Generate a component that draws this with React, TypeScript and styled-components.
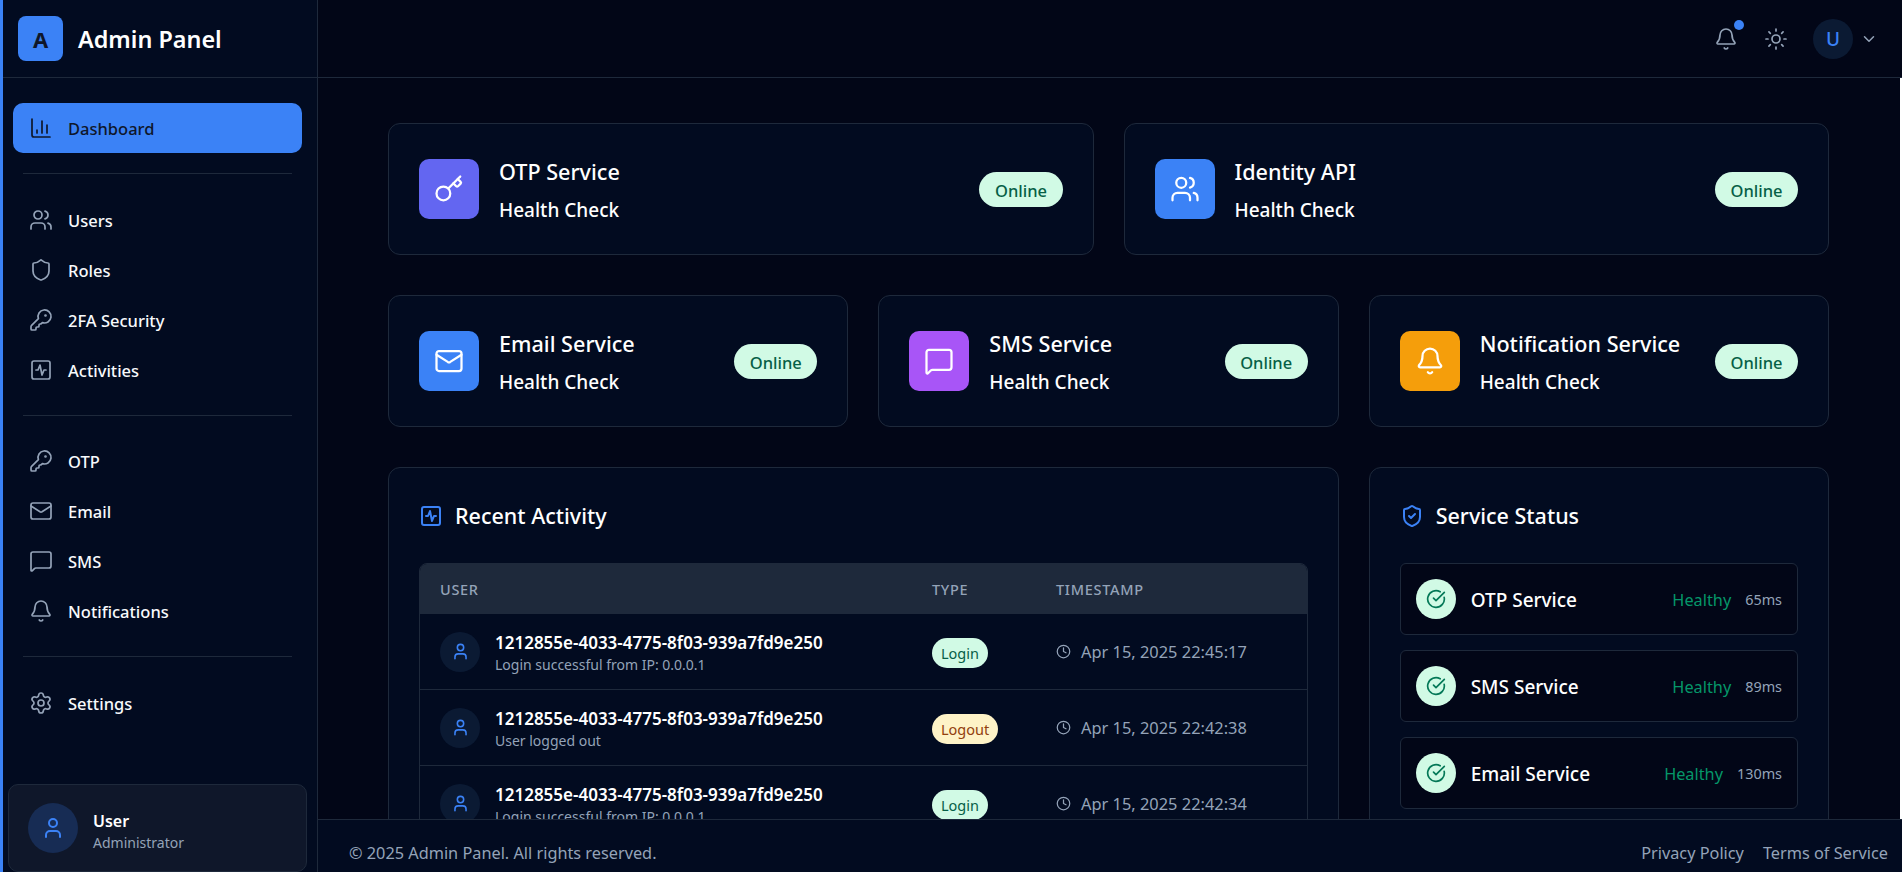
import React from 'react';
import styled, { createGlobalStyle } from 'styled-components';
import {
  ChartColumn, Users, Shield, KeyRound, SquareActivity, Mail, MessageSquare, Bell, Settings, User,
  Sun, ChevronDown, Key, ShieldCheck, CircleCheckBig, Clock,
} from 'lucide-react';

const Global = createGlobalStyle`
  html, body { margin: 0; padding: 0; height: 100%; overflow: hidden; background: #020617; }
  body { font-family: "Noto Sans", "Liberation Sans", sans-serif; color: #fff; }
  #root { height: 100%; }
  * { box-sizing: border-box; }
`;

const Shell = styled.div`
  display: flex;
  height: 872px;
  overflow: hidden;
  background: #020617;
`;
const Sidebar = styled.aside`
  width: 318px;
  flex: none;
  display: flex;
  flex-direction: column;
  background: #020b20;
  border-left: 3px solid #3b82f6;
  border-right: 1px solid #1e293b;
`;
const Brand = styled.div`
  height: 78px;
  flex: none;
  display: flex;
  align-items: center;
  gap: 15px;
  padding-left: 15px;
  border-bottom: 1px solid #1e293b;
`;
const Logo = styled.div`
  width: 45px;
  height: 45px;
  border-radius: 8px;
  background: #3b82f6;
  color: #0f172a;
  font-size: 22px;
  font-weight: 700;
  display: flex;
  align-items: center;
  justify-content: center;
`;
const BrandName = styled.div`
  font-size: 23.4px;
  font-weight: 600;
`;
const Nav = styled.nav`
  flex: 1;
  padding: 25px 15px 0 10px;
  display: flex;
  flex-direction: column;
`;
const NavItem = styled.div<{ $active?: boolean }>`
  height: 50px;
  flex: none;
  display: flex;
  align-items: center;
  gap: 15px;
  padding-left: 16px;
  border-radius: 10px;
  font-size: 16.5px;
  font-weight: 500;
  background: ${p => (p.$active ? '#3b82f6' : 'transparent')};
  color: ${p => (p.$active ? '#0f172a' : '#f8fafc')};
  & svg { color: ${p => (p.$active ? '#0f172a' : '#94a3b8')}; flex: none; }
`;
const NavDivider = styled.div<{ $after?: number }>`
  height: 1px;
  margin: 20px 10px ${p => p.$after ?? 21}px;
  background: #1e293b;
  flex: none;
`;
const UserCard = styled.div`
  height: 88px;
  flex: none;
  margin: 0 10px 0 5px;
  padding: 0 20px 0 19px;
  display: flex;
  align-items: center;
  gap: 15px;
  background: #0f172a;
  border: 1px solid #1e293b;
  border-radius: 10px;
`;
const UserAvatar = styled.div`
  width: 50px;
  height: 50px;
  border-radius: 50%;
  background: #172c54;
  color: #3b82f6;
  display: flex;
  align-items: center;
  justify-content: center;
`;
const UserName = styled.div`
  font-size: 16px;
  font-weight: 600;
  line-height: 22px;
  margin-top: 7px;
`;
const UserRole = styled.div`
  font-size: 14px;
  color: #94a3b8;
  line-height: 20px;
  margin-top: 1px;
`;
const Content = styled.div`
  flex: 1;
  min-width: 0;
  display: flex;
  flex-direction: column;
  background: #fff;
`;
const TopBar = styled.header`
  height: 78px;
  flex: none;
  display: flex;
  align-items: center;
  justify-content: flex-end;
  padding-right: 24px;
  background: #020617;
  border-bottom: 1px solid #1e293b;
`;
const BellWrap = styled.div`
  position: relative;
  display: flex;
  color: #94a3b8;
  margin-right: 26px;
`;
const Dot = styled.span`
  position: absolute;
  top: -7px;
  right: -6px;
  width: 10px;
  height: 10px;
  border-radius: 50%;
  background: #3b82f6;
`;
const SunWrap = styled.div`
  display: flex;
  color: #94a3b8;
  margin-right: 25px;
`;
const TopAvatar = styled.div`
  width: 40px;
  height: 40px;
  border-radius: 50%;
  background: #0b1a33;
  color: #3b82f6;
  font-size: 19px;
  font-weight: 500;
  display: flex;
  align-items: center;
  justify-content: center;
  margin-right: 7px;
`;
const ChevronWrap = styled.div`
  display: flex;
  color: #94a3b8;
`;
const Main = styled.main`
  flex: 1;
  min-height: 0;
  overflow: hidden;
  margin-right: 2px;
  padding: 45px 71px 0 70px;
  background: #020617;
`;
const CardRow = styled.div<{ $cols: number }>`
  display: grid;
  grid-template-columns: repeat(${p => p.$cols}, 1fr);
  gap: 30px;
  margin-bottom: 40px;
`;
const ServiceCard = styled.div`
  height: 132px;
  display: flex;
  align-items: center;
  padding: 0 30px;
  background: #020b20;
  border: 1px solid #1e293b;
  border-radius: 12px;
`;
const IconBox = styled.div<{ $bg: string }>`
  width: 60px;
  height: 60px;
  flex: none;
  border-radius: 10px;
  background: ${p => p.$bg};
  color: #fff;
  display: flex;
  align-items: center;
  justify-content: center;
  margin-right: 20px;
`;
const CardText = styled.div`
  flex: 1;
  min-width: 0;
  padding-top: 2px;
`;
const CardTitle = styled.div`
  font-size: 21.6px;
  font-weight: 500;
  line-height: 30px;
  margin-bottom: 9px;
  white-space: nowrap;
`;
const CardSub = styled.div`
  font-size: 19px;
  font-weight: 500;
  line-height: 28px;
`;
const OnlinePill = styled.span`
  flex: none;
  padding: 2px 15.5px 0;
  height: 35px;
  display: flex;
  align-items: center;
  border-radius: 18px;
  background: #d1fae5;
  color: #065f46;
  font-size: 16.5px;
  font-weight: 500;
`;
const Panels = styled.div`
  display: grid;
  grid-template-columns: repeat(3, 1fr);
  gap: 30px;
  align-items: start;
`;
const Panel = styled.section<{ $span?: number }>`
  grid-column: span ${p => p.$span ?? 1};
  min-width: 0;
  background: #020b20;
  border: 1px solid #1e293b;
  border-radius: 12px;
  padding: 30px;
  height: 600px;
`;
const PanelTitle = styled.h2`
  display: flex;
  align-items: center;
  gap: 12px;
  margin: 0 0 29px;
  font-size: 21.5px;
  font-weight: 500;
  line-height: 36px;
  height: 36px;
  & svg { color: #3b82f6; flex: none; }
`;
const TableWrap = styled.div`
  border: 1px solid #1e293b;
  border-radius: 8px 8px 0 0;
  overflow: hidden;
`;
const Table = styled.table`
  width: 100%;
  border-collapse: separate;
  border-spacing: 0;
  table-layout: fixed;
`;
const Th = styled.th<{ $w?: number }>`
  width: ${p => (p.$w ? `${p.$w}px` : 'auto')};
  height: 50px;
  padding: 0 20px;
  background: #1e293b;
  color: #94a3b8;
  text-align: left;
  font-size: 14.5px;
  font-weight: 500;
  letter-spacing: 0.7px;
  text-transform: uppercase;
`;
const Td = styled.td`
  height: 76px;
  padding: 0 20px;
  border-bottom: 1px solid #1e293b;
`;
const UserCell = styled.div`
  display: flex;
  align-items: center;
  gap: 15px;
`;
const RowAvatar = styled.div`
  width: 40px;
  height: 40px;
  border-radius: 50%;
  background: #0b1a33;
  color: #3b82f6;
  display: flex;
  align-items: center;
  justify-content: center;
  flex: none;
`;
const RowText = styled.div`
  padding-top: 2px;
`;
const RowId = styled.div`
  font-size: 17px;
  font-weight: 600;
  line-height: 24px;
  white-space: nowrap;
`;
const RowSub = styled.div`
  font-size: 14px;
  color: #94a3b8;
  line-height: 20px;
`;
const TypePill = styled.span<{ $kind: 'login' | 'logout' }>`
  display: inline-flex;
  align-items: center;
  height: 30px;
  padding: 0 9px;
  margin-top: 2px;
  border-radius: 15px;
  font-size: 14.5px;
  font-weight: 400;
  background: ${p => (p.$kind === 'login' ? '#d1fae5' : '#fef3c7')};
  color: ${p => (p.$kind === 'login' ? '#065f46' : '#92400e')};
`;
const TimeCell = styled.div`
  display: flex;
  align-items: center;
  gap: 10px;
  color: #94a3b8;
  font-size: 16.4px;
  white-space: nowrap;
`;
const StatusList = styled.div`
  display: flex;
  flex-direction: column;
  gap: 15px;
`;
const StatusItem = styled.div`
  height: 72px;
  display: flex;
  align-items: center;
  padding: 0 15px;
  background: #020617;
  border: 1px solid #1e293b;
  border-radius: 6px;
`;
const StatusIcon = styled.div`
  width: 40px;
  height: 40px;
  flex: none;
  border-radius: 50%;
  background: #d1fae5;
  color: #047857;
  display: flex;
  align-items: center;
  justify-content: center;
  margin-right: 15px;
`;
const StatusName = styled.div`
  flex: 1;
  padding-top: 2px;
  font-size: 19px;
  font-weight: 500;
  white-space: nowrap;
`;
const Healthy = styled.div`
  color: #059669;
  padding-top: 2px;
  font-size: 16.3px;
  margin-right: 14px;
`;
const Latency = styled.div`
  color: #94a3b8;
  font-size: 14.4px;
`;
const Footer = styled.footer`
  height: 53px;
  flex: none;
  display: flex;
  align-items: center;
  justify-content: space-between;
  padding: 14px 14px 0 31px;
  background: #020b20;
  border-top: 1px solid #1e293b;
  color: #94a3b8;
  font-size: 16.3px;
`;
const FooterLinks = styled.div`
  display: flex;
  gap: 19px;
`;

const topCards = [
  { name: 'OTP Service', bg: '#6366f1', icon: <Key size={30} strokeWidth={1.8} /> },
  { name: 'Identity API', bg: '#3b82f6', icon: <Users size={30} strokeWidth={1.8} /> },
];
const midCards = [
  { name: 'Email Service', bg: '#3b82f6', icon: <Mail size={30} strokeWidth={1.8} /> },
  { name: 'SMS Service', bg: '#a855f7', icon: <MessageSquare size={30} strokeWidth={1.8} /> },
  { name: 'Notification Service', bg: '#f59e0b', icon: <Bell size={30} strokeWidth={1.8} /> },
];
const ID = '1212855e-4033-4775-8f03-939a7fd9e250';
const rows = [
  { sub: 'Login successful from IP: 0.0.0.1', kind: 'login' as const, label: 'Login', time: 'Apr 15, 2025 22:45:17' },
  { sub: 'User logged out', kind: 'logout' as const, label: 'Logout', time: 'Apr 15, 2025 22:42:38' },
  { sub: 'Login successful from IP: 0.0.0.1', kind: 'login' as const, label: 'Login', time: 'Apr 15, 2025 22:42:34' },
];
const statuses = [
  { name: 'OTP Service', ms: '65ms' },
  { name: 'SMS Service', ms: '89ms' },
  { name: 'Email Service', ms: '130ms' },
];

function Card({ c }: { c: { name: string; bg: string; icon: React.ReactNode } }) {
  return (
    <ServiceCard>
      <IconBox $bg={c.bg}>{c.icon}</IconBox>
      <CardText>
        <CardTitle>{c.name}</CardTitle>
        <CardSub>Health Check</CardSub>
      </CardText>
      <OnlinePill>Online</OnlinePill>
    </ServiceCard>
  );
}

export default function App() {
  return (
    <Shell>
      <Global />
      <Sidebar>
        <Brand>
          <Logo>A</Logo>
          <BrandName>Admin Panel</BrandName>
        </Brand>
        <Nav>
          <NavItem $active><ChartColumn size={24} strokeWidth={1.7} />Dashboard</NavItem>
          <NavDivider />
          <NavItem><Users size={24} strokeWidth={1.7} />Users</NavItem>
          <NavItem><Shield size={24} strokeWidth={1.7} />Roles</NavItem>
          <NavItem><KeyRound size={24} strokeWidth={1.7} />2FA Security</NavItem>
          <NavItem><SquareActivity size={24} strokeWidth={1.7} />Activities</NavItem>
          <NavDivider $after={20} />
          <NavItem><KeyRound size={24} strokeWidth={1.7} />OTP</NavItem>
          <NavItem><Mail size={24} strokeWidth={1.7} />Email</NavItem>
          <NavItem><MessageSquare size={24} strokeWidth={1.7} />SMS</NavItem>
          <NavItem><Bell size={24} strokeWidth={1.7} />Notifications</NavItem>
          <NavDivider />
          <NavItem><Settings size={24} strokeWidth={1.7} />Settings</NavItem>
        </Nav>
        <UserCard>
          <UserAvatar><User size={24} /></UserAvatar>
          <div>
            <UserName>User</UserName>
            <UserRole>Administrator</UserRole>
          </div>
        </UserCard>
      </Sidebar>
      <Content>
        <TopBar>
          <BellWrap><Bell size={24} strokeWidth={1.7} /><Dot /></BellWrap>
          <SunWrap><Sun size={24} strokeWidth={1.7} /></SunWrap>
          <TopAvatar>U</TopAvatar>
          <ChevronWrap><ChevronDown size={18} /></ChevronWrap>
        </TopBar>
        <Main>
          <CardRow $cols={2}>{topCards.map(c => <Card key={c.name} c={c} />)}</CardRow>
          <CardRow $cols={3}>{midCards.map(c => <Card key={c.name} c={c} />)}</CardRow>
          <Panels>
            <Panel $span={2}>
              <PanelTitle><SquareActivity size={24} />Recent Activity</PanelTitle>
              <TableWrap>
                <Table>
                  <thead>
                    <tr>
                      <Th $w={492}>User</Th>
                      <Th $w={124}>Type</Th>
                      <Th>Timestamp</Th>
                    </tr>
                  </thead>
                  <tbody>
                    {rows.map(r => (
                      <tr key={r.time}>
                        <Td>
                          <UserCell>
                            <RowAvatar><User size={19} /></RowAvatar>
                            <RowText>
                              <RowId>{ID}</RowId>
                              <RowSub>{r.sub}</RowSub>
                            </RowText>
                          </UserCell>
                        </Td>
                        <Td><TypePill $kind={r.kind}>{r.label}</TypePill></Td>
                        <Td><TimeCell><Clock size={15} />{r.time}</TimeCell></Td>
                      </tr>
                    ))}
                  </tbody>
                </Table>
              </TableWrap>
            </Panel>
            <Panel>
              <PanelTitle><ShieldCheck size={24} />Service Status</PanelTitle>
              <StatusList>
                {statuses.map(s => (
                  <StatusItem key={s.name}>
                    <StatusIcon><CircleCheckBig size={20} /></StatusIcon>
                    <StatusName>{s.name}</StatusName>
                    <Healthy>Healthy</Healthy>
                    <Latency>{s.ms}</Latency>
                  </StatusItem>
                ))}
              </StatusList>
            </Panel>
          </Panels>
        </Main>
        <Footer>
          <span>© 2025 Admin Panel. All rights reserved.</span>
          <FooterLinks>
            <span>Privacy Policy</span>
            <span>Terms of Service</span>
          </FooterLinks>
        </Footer>
      </Content>
    </Shell>
  );
}
